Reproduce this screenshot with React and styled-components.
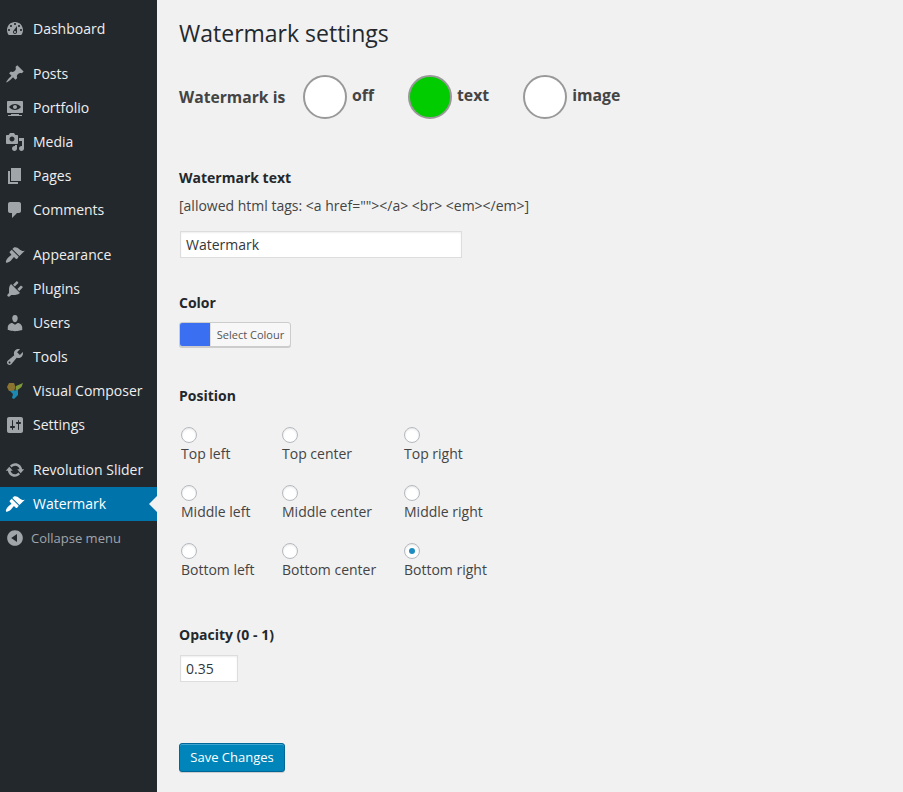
import React from 'react';
import styled, { createGlobalStyle } from 'styled-components';

const icons = {
    dashboard: 'M3.76 16h12.48c1.1-1.37 1.76-3.11 1.76-5 0-4.42-3.58-8-8-8s-8 3.58-8 8c0 1.89.66 3.63 1.76 5zM10 4c.55 0 1 .45 1 1s-.45 1-1 1-1-.45-1-1 .45-1 1-1zM6 6c.55 0 1 .45 1 1s-.45 1-1 1-1-.45-1-1 .45-1 1-1zm8 0c.55 0 1 .45 1 1s-.45 1-1 1-1-.45-1-1 .45-1 1-1zm-5.37 5.55L12 7v6c0 1.1-.9 2-2 2s-2-.9-2-2c0-.57.24-1.08.63-1.45zM4 10c.55 0 1 .45 1 1s-.45 1-1 1-1-.45-1-1 .45-1 1-1zm12 0c.55 0 1 .45 1 1s-.45 1-1 1-1-.45-1-1 .45-1 1-1zm-5 3c0-.55-.45-1-1-1s-1 .45-1 1 .45 1 1 1 1-.45 1-1z',
    post: 'M10.44 3.02l1.82-1.82 6.36 6.35-1.83 1.82c-1.05-.68-2.48-.57-3.41.36l-.75.75c-.92.93-1.04 2.35-.35 3.41l-1.83 1.82-2.41-2.41-2.8 2.79c-.42.42-3.38 2.71-3.8 2.29s1.86-3.39 2.28-3.81l2.79-2.79L4.1 9.36l1.83-1.82c1.05.69 2.48.57 3.4-.36l.75-.75c.93-.92 1.05-2.35.36-3.41z',
    portfolio: 'M18 14V4c0-.55-.45-1-1-1H3c-.55 0-1 .45-1 1v10c0 .55.45 1 1 1h14c.55 0 1-.45 1-1zm-8-8c2.3 0 4.4 1.14 6 3-1.6 1.86-3.7 3-6 3s-4.4-1.14-6-3c1.6-1.86 3.7-3 6-3zm2 3c0-1.1-.9-2-2-2s-2 .9-2 2 .9 2 2 2 2-.9 2-2zm2 8h3v1H3v-1h3v-1h8v1z',
    media: 'M13 11V4c0-.55-.45-1-1-1h-1.67L9 1H5L3.67 3H2c-.55 0-1 .45-1 1v7c0 .55.45 1 1 1h10c.55 0 1-.45 1-1zM7 4.5c1.38 0 2.5 1.12 2.5 2.5S8.38 9.5 7 9.5 4.5 8.38 4.5 7 5.62 4.5 7 4.5zM14 6h5v10.5c0 1.38-1.12 2.5-2.5 2.5S14 17.88 14 16.5s1.12-2.5 2.5-2.5c.17 0 .34.02.5.05V9h-3V6zm-4 8.05V13h2v3.5c0 1.38-1.12 2.5-2.5 2.5S7 17.88 7 16.5 8.12 14 9.5 14c.17 0 .34.02.5.05z',
    page: 'M6 15V2h10v13H6zm-1 1h8v2H3V5h2v11z',
    comments: 'M5 2h9c1.1 0 2 .9 2 2v7c0 1.1-.9 2-2 2h-2l-5 5v-5H5c-1.1 0-2-.9-2-2V4c0-1.1.9-2 2-2z',
    brush: 'M14.48 11.06L7.41 3.99l1.5-1.5c.5-.56 2.3-.47 3.51.32 1.21.8 1.43 1.28 2.91 2.1 1.18.64 2.45 1.26 4.45.85zm-.71.71L6.7 4.7 4.93 6.47c-.39.39-.39 1.02 0 1.41l1.06 1.06c.39.39.39 1.03 0 1.42-.6.6-1.43 1.11-2.21 1.69-.35.26-.7.53-1.01.84C1.43 14.23.4 16.85 1.1 17.55c.7.7 3.32-.33 4.66-1.68.31-.31.58-.66.84-1.01.58-.78 1.09-1.61 1.69-2.21.39-.39 1.02-.39 1.41 0l1.06 1.06c.39.39 1.02.39 1.41 0z',
    plugin: 'M13.11 4.36L9.87 7.6 8 5.73l3.24-3.24c.35-.34 1.05-.2 1.56.32.52.51.66 1.21.31 1.55zm-8 1.77l.91-1.12 9.01 9.01-1.19.84c-.71.71-2.63 1.16-3.82 1.16H6.14L4.9 17.26c-.59.59-1.54.59-2.12 0-.59-.58-.59-1.53 0-2.12l1.24-1.24v-3.88c0-1.13.4-3.19 1.09-3.89zm7.26 3.97l3.24-3.24c.34-.35 1.04-.21 1.55.31.52.51.66 1.21.31 1.55l-3.24 3.25z',
    users: 'M10 9.25c-2.27 0-2.73-3.44-2.73-3.44C7 4.02 7.82 2 9.97 2c2.16 0 2.98 2.02 2.71 3.81 0 0-.41 3.44-2.68 3.44zm0 2.57L12.72 10c2.39 0 4.52 2.33 4.52 4.53v2.49s-3.65 1.13-7.24 1.13c-3.65 0-7.24-1.13-7.24-1.13v-2.49c0-2.25 1.94-4.48 4.47-4.48z',
    tools: 'M16.68 9.77c-1.34 1.34-3.3 1.67-4.95.99l-5.41 6.52c-.99.99-2.59.99-3.58 0s-.99-2.59 0-3.57l6.52-5.42c-.68-1.65-.35-3.61.99-4.95 1.28-1.28 3.12-1.62 4.72-1.06l-2.89 2.89 2.82 2.82 2.86-2.87c.53 1.58.18 3.39-1.08 4.65zM3.81 16.21c.4.39 1.04.39 1.43 0 .4-.4.4-1.04 0-1.43-.39-.4-1.03-.4-1.43 0-.39.39-.39 1.03 0 1.43z',
    settings: 'M18 16V4c0-1.1-.9-2-2-2H4c-1.1 0-2 .9-2 2v12c0 1.1.9 2 2 2h12c1.1 0 2-.9 2-2zM8 11h1c.55 0 1 .45 1 1s-.45 1-1 1H8v1.5c0 .28-.22.5-.5.5s-.5-.22-.5-.5V13H6c-.55 0-1-.45-1-1s.45-1 1-1h1V5.5c0-.28.22-.5.5-.5s.5.22.5.5V11zm5-2h-1c-.55 0-1-.45-1-1s.45-1 1-1h1V5.5c0-.28.22-.5.5-.5s.5.22.5.5V7h1c.55 0 1 .45 1 1s-.45 1-1 1h-1v5.5c0 .28-.22.5-.5.5s-.5-.22-.5-.5V9z',
    update: 'M10.2 3.28c3.53 0 6.43 2.61 6.92 6h2.08l-3.5 4-3.5-4h2.32c-.45-1.97-2.21-3.45-4.32-3.45-1.45 0-2.73.71-3.54 1.78L4.95 5.66C6.23 4.2 8.11 3.28 10.2 3.28zm-.4 13.44c-3.52 0-6.43-2.61-6.92-6H.8l3.5-4c1.17 1.33 2.33 2.67 3.5 4H5.48c.45 1.97 2.21 3.45 4.32 3.45 1.45 0 2.73-.71 3.54-1.78l1.71 1.95c-1.28 1.46-3.15 2.38-5.25 2.38z',
    collapse: 'M10 2.16c4.33 0 7.84 3.51 7.84 7.84s-3.51 7.84-7.84 7.84S2.16 14.33 2.16 10 5.71 2.16 10 2.16zm2 11.72V6.12L6.18 9.97z',
};

const menuGroups = [
    [{ label: 'Dashboard', icon: 'dashboard' }],
    [
        { label: 'Posts', icon: 'post' },
        { label: 'Portfolio', icon: 'portfolio' },
        { label: 'Media', icon: 'media' },
        { label: 'Pages', icon: 'page' },
        { label: 'Comments', icon: 'comments' },
    ],
    [
        { label: 'Appearance', icon: 'brush' },
        { label: 'Plugins', icon: 'plugin' },
        { label: 'Users', icon: 'users' },
        { label: 'Tools', icon: 'tools' },
        { label: 'Visual Composer', icon: 'composer' },
        { label: 'Settings', icon: 'settings' },
    ],
    [
        { label: 'Revolution Slider', icon: 'update' },
        { label: 'Watermark', icon: 'brush', current: true },
    ],
];

const positions = [
    { label: 'Top left' },
    { label: 'Top center' },
    { label: 'Top right' },
    { label: 'Middle left' },
    { label: 'Middle center' },
    { label: 'Middle right' },
    { label: 'Bottom left' },
    { label: 'Bottom center' },
    { label: 'Bottom right', checked: true },
];

const modes = [
    { label: 'off', gap: 34 },
    { label: 'text', on: true, gap: 34 },
    { label: 'image', gap: 0 },
];

const GlobalStyle = createGlobalStyle`
    html, body {
        margin: 0;
        height: 100%;
        overflow: hidden;
        background: #f1f1f1;
    }
    body {
        font-family: "Open Sans", "Liberation Sans", sans-serif;
        font-size: 14px;
        color: #444;
    }
`
const Page = styled.div`
    display: flex;
    height: 792px;
`
const Sidebar = styled.nav`
    width: 157px;
    flex-shrink: 0;
    padding-top: 12px;
    background: #23282d;
`
const MenuGroup = styled.div`
    margin-bottom: 11px;
`
const MenuItem = styled.a`
    position: relative;
    display: flex;
    align-items: center;
    height: 34px;
    padding-left: 5px;
    color: ${(props) => (props.$current ? '#fff' : '#eee')};
    background: ${(props) => (props.$current ? '#0073aa' : 'transparent')};
`
const MenuText = styled.span`
    padding-bottom: 2px;
`
const MenuArrow = styled.span`
    position: absolute;
    right: 0;
    top: 9px;
    border: 8px solid transparent;
    border-right-color: #f1f1f1;
    border-left-width: 0;
`
const MenuIcon = styled.svg`
    width: 20px;
    height: 20px;
    flex-shrink: 0;
    margin-right: 8px;
    fill: ${(props) => (props.$current ? '#fff' : '#a0a5aa')};
`
const CollapseItem = styled.a`
    display: flex;
    align-items: center;
    height: 34px;
    margin-top: -11px;
    padding-left: 5px;
    font-size: 13px;
    color: #a0a5aa;

    ${MenuIcon} {
        margin-right: 6px;
    }
`
const Main = styled.main`
    flex: 1;
    display: flex;
    flex-direction: column;
    align-items: flex-start;
    padding: 18px 0 0 22px;
`
const Title = styled.h1`
    margin: 0;
    font-size: 23px;
    font-weight: 400;
    line-height: 30px;
    color: #23282d;
`
const ModeRow = styled.div`
    display: flex;
    align-items: center;
    margin-top: 27px;
`
const ModeTitle = styled.span`
    width: 124px;
    font-size: 15.7px;
    font-weight: 700;
    color: #444;
`
const ModeLabel = styled.span`
    margin-left: 5px;
    padding-bottom: 4px;
    font-size: 15.8px;
    font-weight: 700;
    color: #444;
`
const ModeOption = styled.label`
    display: flex;
    align-items: center;
    margin-right: ${(props) => props.$gap}px;
`
const ModeCircle = styled.span`
    box-sizing: border-box;
    width: 44px;
    height: 44px;
    border: 2px solid #999;
    border-radius: 50%;
    background: ${(props) => (props.$on ? '#00cc00' : '#fff')};
`
const FieldLabel = styled.div`
    margin-top: ${(props) => props.$top}px;
    font-weight: 700;
    line-height: 22px;
    color: #23282d;
`
const Help = styled.div`
    margin-top: 6px;
    line-height: 22px;
`
const TextInput = styled.input`
    box-sizing: border-box;
    width: ${(props) => props.$width}px;
    height: 27px;
    margin: ${(props) => props.$top}px 0 0 1px;
    padding: 0 5px 1px;
    border: 1px solid #ddd;
    outline: none;
    background: #fff;
    font: inherit;
    color: #32373c;
    box-shadow: inset 0 1px 2px rgba(0, 0, 0, 0.07);
`
const ColorButton = styled.button`
    display: flex;
    box-sizing: border-box;
    width: 112px;
    height: 25px;
    margin-top: 8px;
    padding: 0;
    overflow: hidden;
    border: 1px solid #ccc;
    border-radius: 3px;
    background: #f7f7f7;
    box-shadow: 0 1px 0 #ccc;
    font-family: inherit;
`
const Swatch = styled.span`
    width: 30px;
    background: #3a6ff2;
`
const ColorText = styled.span`
    flex: 1;
    font-size: 11px;
    line-height: 23px;
    text-align: center;
    color: #555;
    border-left: 1px solid #ddd;
`
const PositionGrid = styled.div`
    display: grid;
    grid-template-columns: 101px 122px auto;
    row-gap: 20px;
    margin: 20px 0 0 2px;
`
const PositionCell = styled.label`
    display: flex;
    flex-direction: column;
    align-items: flex-start;
    line-height: 22px;
`
const Radio = styled.span`
    display: flex;
    align-items: center;
    justify-content: center;
    box-sizing: border-box;
    width: 16px;
    height: 16px;
    border: 1px solid #b4b9be;
    border-radius: 50%;
    background: #fff;
    box-shadow: inset 0 1px 2px rgba(0, 0, 0, 0.1);
`
const RadioDot = styled.span`
    width: 6px;
    height: 6px;
    border-radius: 50%;
    background: #1e8cbe;
`
const SaveButton = styled.button`
    box-sizing: border-box;
    width: 106px;
    height: 29px;
    margin-top: 61px;
    padding: 0 0 2px;
    border: 1px solid #006799;
    border-radius: 3px;
    background: #0085ba;
    box-shadow: inset 0 1px 0 rgba(120, 200, 230, 0.5), 0 1px 0 rgba(0, 0, 0, 0.15);
    font-family: inherit;
    font-size: 13px;
    color: #fff;
`

function ComposerIcon() {
    return (
        <MenuIcon viewBox="0 0 20 20">
            <polygon points="4,2 9,2 10.5,6 9,10 4,10 2,6" fill="#8a7430" />
            <polygon points="11,5 18,2 16.5,6 12,9.5 10.5,9" fill="#7f9a3a" />
            <polygon points="5,10 13,9 13,14 9,18 7,17 8,13" fill="#1c8ab0" />
        </MenuIcon>
    );
}

function Icon({ name, current }) {
    if (name === 'composer') {
        return <ComposerIcon />;
    }
    return (
        <MenuIcon viewBox="0 0 20 20" $current={current}>
            <path d={icons[name]} />
        </MenuIcon>
    );
}

const App = function () {
    return (
        <Page>
            <GlobalStyle />
            <Sidebar>
                {menuGroups.map((group) => (
                    <MenuGroup key={group[0].label}>
                        {group.map((item) => (
                            <MenuItem key={item.label} $current={item.current}>
                                <Icon name={item.icon} current={item.current} />
                                <MenuText>{item.label}</MenuText>
                                {item.current && <MenuArrow />}
                            </MenuItem>
                        ))}
                    </MenuGroup>
                ))}
                <CollapseItem>
                    <Icon name="collapse" />
                    Collapse menu
                </CollapseItem>
            </Sidebar>
            <Main>
                <Title>Watermark settings</Title>
                <ModeRow>
                    <ModeTitle>Watermark is</ModeTitle>
                    {modes.map((mode) => (
                        <ModeOption key={mode.label} $gap={mode.gap}>
                            <ModeCircle $on={mode.on} />
                            <ModeLabel>{mode.label}</ModeLabel>
                        </ModeOption>
                    ))}
                </ModeRow>

                <FieldLabel $top={48}>Watermark text</FieldLabel>
                <Help>{'[allowed html tags: <a href=""></a> <br> <em></em>]'}</Help>
                <TextInput $width={282} $top={14} defaultValue="Watermark" />

                <FieldLabel $top={34}>Color</FieldLabel>
                <ColorButton>
                    <Swatch />
                    <ColorText>Select Colour</ColorText>
                </ColorButton>

                <FieldLabel $top={38}>Position</FieldLabel>
                <PositionGrid>
                    {positions.map((position) => (
                        <PositionCell key={position.label}>
                            <Radio>{position.checked && <RadioDot />}</Radio>
                            {position.label}
                        </PositionCell>
                    ))}
                </PositionGrid>

                <FieldLabel $top={43}>Opacity (0 - 1)</FieldLabel>
                <TextInput $width={58} $top={9} defaultValue="0.35" />

                <SaveButton>Save Changes</SaveButton>
            </Main>
        </Page>
    );
}

export default App
